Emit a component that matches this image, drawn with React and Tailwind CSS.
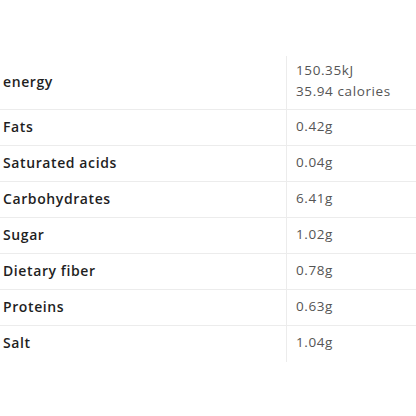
const rows = [
  { label: "energy", values: ["150.35kJ", "35.94 calories"] },
  { label: "Fats", values: ["0.42g"] },
  { label: "Saturated acids", values: ["0.04g"] },
  { label: "Carbohydrates", values: ["6.41g"] },
  { label: "Sugar", values: ["1.02g"] },
  { label: "Dietary fiber", values: ["0.78g"] },
  { label: "Proteins", values: ["0.63g"] },
  { label: "Salt", values: ["1.04g"] },
];

export default function App() {
  return (
    <div className="w-[416px] h-[416px] bg-white pt-[56px] font-['Open_Sans',sans-serif]">
      <div className="flex flex-col">
        {rows.map((row, i) => (
          <div
            key={row.label}
            className={`flex ${i < rows.length - 1 ? "border-b border-[#ececec]" : ""} ${
              row.values.length > 1 ? "h-[54px]" : "h-[36px]"
            }`}
          >
            <div className="w-[286px] flex items-center pl-[3px] pb-[3px] text-[14px] font-semibold text-[#1f1f1f] tracking-[0.6px]">
              {row.label}
            </div>
            <div className="flex-1 flex flex-col justify-center border-l border-[#ececec] pl-[9px] pb-[3px] text-[13.5px] leading-[21px] text-[#555] tracking-[0.6px]">
              {row.values.map((v) => (
                <span key={v}>{v}</span>
              ))}
            </div>
          </div>
        ))}
      </div>
    </div>
  );
}
